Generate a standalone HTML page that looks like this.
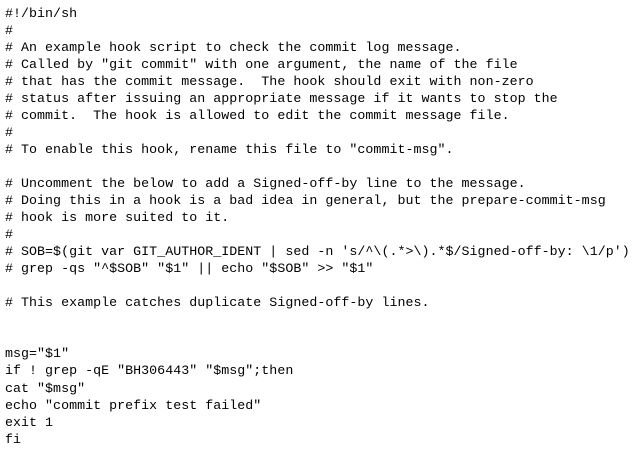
<!DOCTYPE html>
<html><head><style>
html,body{margin:0;padding:0;background:#fff;width:644px;height:455px;overflow:hidden}
pre{margin:0;position:absolute;left:5px;top:4.5px;font-family:"Liberation Mono",monospace;font-size:13.3px;letter-spacing:0.03px;line-height:17.04px;color:#000}
</style></head><body><pre>#!/bin/sh
#
# An example hook script to check the commit log message.
# Called by "git commit" with one argument, the name of the file
# that has the commit message.  The hook should exit with non-zero
# status after issuing an appropriate message if it wants to stop the
# commit.  The hook is allowed to edit the commit message file.
#
# To enable this hook, rename this file to "commit-msg".

# Uncomment the below to add a Signed-off-by line to the message.
# Doing this in a hook is a bad idea in general, but the prepare-commit-msg
# hook is more suited to it.
#
# SOB=$(git var GIT_AUTHOR_IDENT | sed -n 's/^\(.*&gt;\).*$/Signed-off-by: \1/p')
# grep -qs "^$SOB" "$1" || echo "$SOB" &gt;&gt; "$1"

# This example catches duplicate Signed-off-by lines.


msg="$1"
if ! grep -qE "BH306443" "$msg";then
cat "$msg"
echo "commit prefix test failed"
exit 1
fi</pre></body></html>
